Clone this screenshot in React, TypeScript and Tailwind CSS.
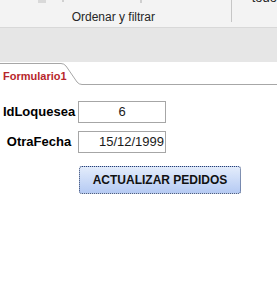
import React from "react";

export default function App() {
  return (
    <div className="w-[277px] h-[291px] bg-white overflow-hidden" style={{ fontFamily: '"Liberation Sans", Arial, sans-serif' }}>
      {/* ribbon bottom */}
      <div className="relative h-[28px] bg-[#f3f3f3] border-b border-[#d8d8d8]">
        <div className="absolute left-[38px] top-0 w-[8px] h-[3px] bg-[#d9d9d9]" />
        <div className="absolute left-[62px] top-0 w-[2px] h-[2px] bg-[#d0d0d0]" />
        <div className="absolute left-[140px] top-0 w-[2px] h-[3px] bg-[#cfcfcf]" />
        <div className="flex">
          <div className="w-[233px] flex justify-center pt-[10px] text-[12px] leading-[14px] text-[#262626]">Ordenar y filtrar</div>
          <div className="ml-[4px] w-px h-[22px] bg-[#c6c6c6]" />
          <div className="pl-[20px] -mt-[9px] text-[13px] leading-[14px] text-[#262626]">todo</div>
        </div>
      </div>
      {/* gray band */}
      <div className="h-[34px] bg-[#e6e6e6]" />
      {/* tab strip */}
      <div className="relative h-[24px] bg-white">
        <svg className="absolute inset-0" width="277" height="24" viewBox="0 0 277 24">
          <path d="M0 1.5 H61 Q64 1.5 66 4 L77 20 Q79 22.5 82 22.5 H277" fill="none" stroke="#a7a7a7" strokeWidth="1" />
        </svg>
        <div className="relative pl-[3px] pt-[7px] text-[11px] leading-[14px] font-bold text-[#b7262b]">Formulario1</div>
      </div>
      {/* form */}
      <div className="pt-[15px]">
        <div className="grid grid-cols-[78px_88px] gap-y-[8px] items-center">
          <div className="text-center text-[13px] font-bold text-black">IdLoquesea</div>
          <div className="h-[22px] border border-[#a6a6a6] flex items-center justify-center text-[13px] text-[#1a1a1a]">6</div>
          <div className="text-center text-[13px] font-bold text-black">OtraFecha</div>
          <div className="h-[22px] border border-[#a6a6a6] flex items-center justify-end pr-[1px] text-[13px] text-[#1a1a1a]">15/12/1999</div>
        </div>
        <div className="pl-[79px] pt-[13px]">
          <div className="w-[162px] h-[28px] rounded-[3px] border border-dotted border-[#2b3f6b] bg-gradient-to-b from-[#e3ecfb] to-[#b5caf3] flex items-center justify-center text-[12px] font-bold text-[#111]">
            ACTUALIZAR PEDIDOS
          </div>
        </div>
      </div>
    </div>
  );
}
